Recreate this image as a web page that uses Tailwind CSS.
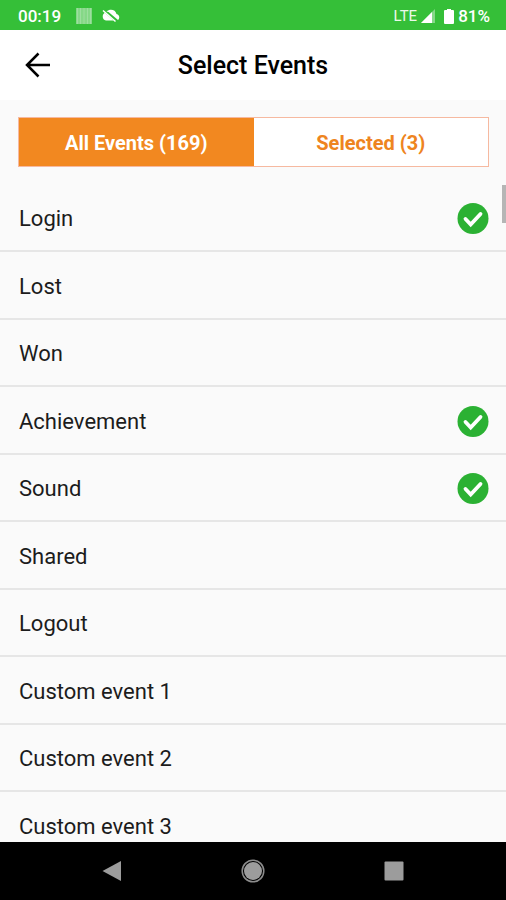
<!DOCTYPE html>
<html lang="en">
<head>
<meta charset="utf-8">
<meta name="viewport" content="width=device-width, initial-scale=1">
<title>Select Events</title>
<script src="https://cdn.jsdelivr.net/npm/@tailwindcss/browser@4"></script>
</head>
<body class="flex h-screen flex-col overflow-hidden bg-[#fafafa] font-['Roboto',sans-serif] text-black">
  <div class="flex h-[30px] shrink-0 items-center bg-[#35bf38] pt-[2px] pr-4 pl-[18px] text-white">
    <span class="text-[17px] leading-5 font-medium">00:19</span>
    <svg class="ml-[15px] h-4 w-4" viewBox="0 0 16 16" aria-hidden="true"><path d="M0 0h16v16H0z" fill="#fff" fill-opacity=".4"/><path d="M1.500 0v16M4.500 0v16M8 0v16M11.500 0v16M14.500 0v16" stroke="#fff" stroke-opacity=".2"/></svg>
    <svg class="ml-[10px] h-4 w-[18px]" viewBox="0 0 18 16" aria-hidden="true"><path d="M4.500 3.500C8 .5 13.500 1.500 14.500 6c3.200.5 3.500 4.500 1.500 6L6.500 4zM2.500 5C-.5 7 .5 12.500 4 12.500h7.500L3 5z" fill="#fff"/><path d="M1 2.500 13.500 13.500" stroke="#fff" stroke-width="1.500"/></svg>
    <span class="ml-auto text-[15px] leading-5 text-white/90">LTE</span>
    <svg class="ml-1 h-[14px] w-[14px]" viewBox="0 0 14 14" aria-hidden="true"><path d="M14 0v14H0z" fill="#fff" fill-opacity=".4"/><path d="M11 3v11H0z" fill="#fff"/></svg>
    <svg class="ml-[9px] h-4 w-[10px]" viewBox="0 0 10 16" aria-hidden="true"><path d="M3 1h4v1h2q1 0 1 1v12q0 1-1 1H1q-1 0-1-1V3q0-1 1-1h2z" fill="#fff"/></svg>
    <span class="ml-[4px] text-[17px] leading-5 font-medium">81%</span>
  </div>

  <header class="grid h-[70px] shrink-0 grid-cols-[1fr_auto_1fr] items-center bg-white px-6">
    <button type="button" aria-label="Back" class="w-7">
      <svg class="h-7 w-7" viewBox="0 0 28 28" fill="none" stroke="#000" stroke-width="2.500" aria-hidden="true"><path d="M26 14H3M14.500 2.500 3 14l11.500 11.500"/></svg>
    </button>
    <h1 class="pt-[2px] text-[25px] leading-8 font-medium">Select Events</h1>
  </header>

  <div role="tablist" aria-label="Event filter" class="mr-[17px] ml-[18px] mt-[17px] mb-[18px] grid h-[50px] shrink-0 grid-cols-2 border border-[#f6b9a0] text-[20px] leading-6 font-bold">
    <button type="button" role="tab" aria-selected="true" class="bg-[#f28820] pt-[2px] text-white">All Events (169)</button>
    <button type="button" role="tab" aria-selected="false" class="bg-white pt-[2px] text-[#ee8420]">Selected (3)</button>
  </div>

  <main class="relative min-h-0 flex-1 overflow-hidden">
    <ul id="events" class="text-[22px] leading-7 text-[#1c1c1c]"></ul>
    <div class="absolute top-0 right-0 h-[38px] w-1 bg-[#b5b5b5]"></div>
  </main>

  <nav aria-label="System" class="flex h-[58px] shrink-0 items-center justify-around bg-black px-[42px]">
    <button type="button" aria-label="Back"><svg class="h-6 w-6" viewBox="0 0 24 24" aria-hidden="true"><path d="M21 2v20L2.500 12z" fill="#9c9c9c"/></svg></button>
    <button type="button" aria-label="Home"><svg class="h-6 w-6" viewBox="0 0 24 24" aria-hidden="true"><circle cx="12" cy="12" r="9" fill="#9c9c9c"/><circle cx="12" cy="12" r="10.800" fill="none" stroke="#8c8c8c" stroke-width="1.500"/></svg></button>
    <button type="button" aria-label="Recent apps"><svg class="h-6 w-6" viewBox="0 0 24 24" aria-hidden="true"><rect x="2.500" y="2.500" width="19" height="19" rx="1" fill="#9c9c9c"/></svg></button>
  </nav>

  <script>
    const events = [
      ["Login", true], ["Lost", false], ["Won", false], ["Achievement", true], ["Sound", true],
      ["Shared", false], ["Logout", false], ["Custom event 1", false], ["Custom event 2", false], ["Custom event 3", false]
    ];
    document.getElementById("events").innerHTML = events.map(([name, on], i) => `
      <li class="h-[67px] border-b-2 border-[#e6e6e6] even:h-[68px]">
        <label for="event-${i}" class="flex h-full items-center justify-between pt-[3px] pr-[17px] pl-[19px]">
          <span>${name}</span>
          <input id="event-${i}" type="checkbox" class="peer sr-only" ${on ? "checked" : ""}>
          <svg class="hidden h-8 w-8 peer-checked:block" viewBox="0 0 32 32" aria-hidden="true"><circle cx="16" cy="15.500" r="15.500" fill="#2bb133"/><path d="m8.500 16 5.200 5.500L23.500 11" fill="none" stroke="#fff" stroke-width="3.800" stroke-linecap="round" stroke-linejoin="miter"/></svg>
        </label>
      </li>`).join("");
  </script>
</body>
</html>
